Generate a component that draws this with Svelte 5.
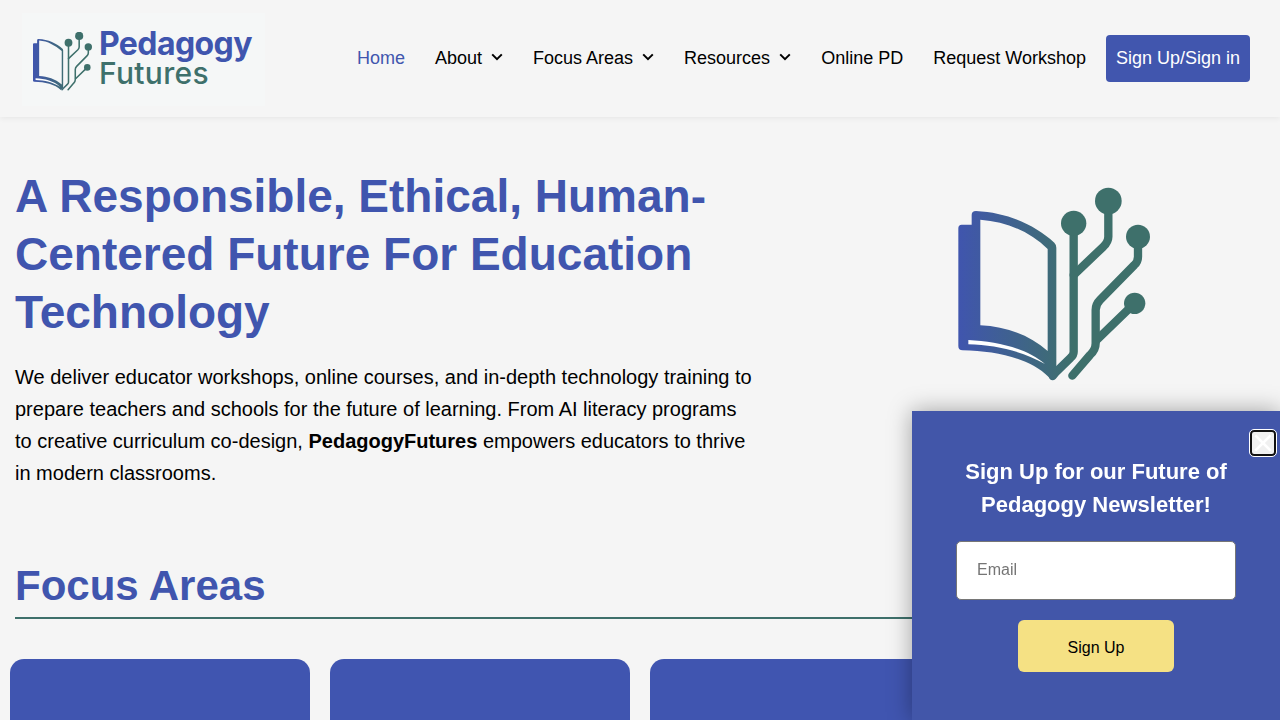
<script>
  const navItems = [
    { label: 'Home', active: true },
    { label: 'About', caret: true },
    { label: 'Focus Areas', caret: true },
    { label: 'Resources', caret: true },
    { label: 'Online PD' },
    { label: 'Request Workshop' },
  ];

  const cards = [1, 2, 3, 4];
</script>

<svelte:head>
  <title>Pedagogy Futures</title>
</svelte:head>

{#snippet bookMark(id, stroke, page, stripe)}
  <defs>
    <linearGradient {id} gradientUnits="userSpaceOnUse" x1="55" y1="0" x2="400" y2="0">
      <stop offset="0" stop-color="#4055ae" />
      <stop offset="1" stop-color="#3e706b" />
    </linearGradient>
  </defs>
  <path
    fill="url(#{id})"
    fill-rule="evenodd"
    d="M65 149H95V120Q95 108 108 108C205 113 285 150 343 203Q349 209 349 218V585L326 606C270 550 170 528 68 526Q55 526 55 513V160Q55 149 65 149Z{page}"
  />
  <path fill="#fff" d={stripe} />
  <g fill="none" stroke="url(#{id})" stroke-width={stroke} stroke-linecap="round" stroke-linejoin="round">
    <path d="M338 603 349 590 392 548Q401 540 401 530V145" />
    <path d="M401 300 490 215Q505 200 505 185V80" />
    <path d="M594 185V245Q594 260 583 270L480 375Q467 388 467 405V505Q467 525 450 540L397 602" />
    <path d="M584 385 470 495" />
  </g>
  <g fill="#3e706b">
    <circle cx="401" cy="145" r="38" />
    <circle cx="505" cy="78" r="40" />
    <circle cx="594" cy="185" r="36" />
    <circle cx="584" cy="385" r="32" />
  </g>
{/snippet}

<div class="page">
  <header class="site-header">
    <a class="logo" href="#home">
      <svg class="logo-mark" viewBox="55 40 575 575" aria-hidden="true">
        {@render bookMark('logo-grad', 15, 'M115 122V470C200 474 270 498 335 552V224C270 170 200 128 115 122Z', 'M80 490V508C170 510 250 530 320 575C260 515 170 495 80 490Z')}
      </svg>
      <span class="logo-text">
        <span class="logo-top">Pedagogy</span>
        <span class="logo-bottom">Futures</span>
      </span>
    </a>

    <nav class="main-nav">
      {#each navItems as item}
        <a href="#home" class="nav-link" class:active={item.active}>
          {item.label}
          {#if item.caret}
            <svg class="caret" viewBox="0 0 12 8" aria-hidden="true">
              <path d="M1.2 1.4 6 6.2l4.8-4.8" />
            </svg>
          {/if}
        </a>
      {/each}
      <a href="#home" class="signin">Sign Up/Sign in</a>
    </nav>
  </header>

  <main>
    <section class="hero">
      <div class="hero-copy">
        <h1>A Responsible, Ethical, Human-Centered Future For Education Technology</h1>
        <p>
          We deliver educator workshops, online courses, and in-depth technology training to
          prepare teachers and schools for the future of learning. From AI literacy programs
          to creative curriculum co-design, <strong>PedagogyFutures</strong> empowers educators to thrive
          in modern classrooms.
        </p>
      </div>
      <div class="hero-art">
        <svg class="hero-mark" viewBox="0 0 690 660" aria-hidden="true">
          {@render bookMark('hero-grad', 25, 'M121 134V451C200 455 270 480 323 528V222C270 170 200 140 121 134Z', 'M85 495V508C170 510 250 530 315 567C260 518 170 500 85 495Z')}
        </svg>
      </div>
    </section>

    <section class="focus">
      <h2>Focus Areas</h2>
      <div class="card-grid">
        {#each cards as card (card)}
          <div class="card"></div>
        {/each}
      </div>
    </section>
  </main>

  <aside class="popup">
    <button class="close" aria-label="Close">
      <svg viewBox="0 0 20 20" aria-hidden="true">
        <path d="M1.5 1.5l17 17M18.5 1.5l-17 17" />
      </svg>
    </button>
    <h3>Sign Up for our Future of Pedagogy Newsletter!</h3>
    <input type="email" placeholder="Email" />
    <button class="submit">Sign Up</button>
  </aside>
</div>

<style>
  :global(body) {
    background: #f5f5f5;
    font-family: "Liberation Sans", Arial, sans-serif;
  }

  .page {
    height: 720px;
    overflow: hidden;
    background: #f5f5f5;
    color: #000;
  }

  a {
    text-decoration: none;
    color: inherit;
  }

  /* header */
  .site-header {
    height: 117px;
    box-sizing: border-box;
    display: flex;
    align-items: center;
    justify-content: space-between;
    padding: 0 30px 0 22px;
    box-shadow: 0 1px 6px rgba(0, 0, 0, 0.07);
  }

  .logo {
    width: 243px;
    height: 93px;
    margin-top: 1px;
    box-sizing: border-box;
    display: flex;
    align-items: center;
    gap: 7px;
    padding-left: 11px;
    background: #f5f7f7;
  }

  .logo-mark {
    width: 59px;
    height: 59px;
    flex: none;
    margin-top: 5px;
  }

  .logo-text {
    display: flex;
    flex-direction: column;
    font-family: Inter, sans-serif;
    line-height: 29px;
    margin-top: -1px;
  }

  .logo-top {
    font-size: 32px;
    font-weight: 700;
    letter-spacing: -0.6px;
    color: #3f55ae;
  }

  .logo-bottom {
    margin-top: 1px;
    font-size: 30px;
    font-weight: 500;
    letter-spacing: 0.3px;
    color: #3e706b;
  }

  .main-nav {
    display: flex;
    align-items: center;
    gap: 30px;
  }

  .nav-link {
    display: flex;
    align-items: center;
    gap: 9px;
    font-size: 18px;
    line-height: 47px;
  }

  .nav-link.active {
    color: #4156ae;
  }

  .caret {
    width: 12px;
    height: 8px;
    margin-bottom: 3px;
  }

  .caret path {
    fill: none;
    stroke: #000;
    stroke-width: 2;
  }

  .signin {
    margin-left: -10px;
    padding: 0 10px;
    font-size: 18px;
    line-height: 47px;
    color: #fff;
    background: #4156ae;
    border-radius: 4px;
  }

  /* hero */
  .hero {
    display: flex;
    padding: 50px 15px 0;
  }

  .hero-copy {
    width: 740px;
    flex: none;
  }

  h1 {
    margin: 0 0 20px;
    font-size: 46px;
    line-height: 58px;
    font-weight: 700;
    color: #4055ae;
  }

  .hero-copy p {
    margin: 0;
    font-size: 20px;
    line-height: 32px;
  }

  .hero-art {
    flex: 1;
    display: flex;
    justify-content: flex-end;
    padding: 8px 80px 0 0;
  }

  .hero-mark {
    width: 230px;
    height: 220px;
    margin-right: 15px;
  }

  /* focus areas */
  .focus {
    margin-top: 68px;
  }

  h2 {
    margin: 0 15px;
    padding-bottom: 2px;
    font-size: 42px;
    line-height: 58px;
    font-weight: 700;
    color: #4055ae;
    border-bottom: 2px solid #3e706b;
  }

  .card-grid {
    display: grid;
    grid-template-columns: repeat(4, 300px);
    gap: 20px;
    margin-top: 40px;
    padding: 0 10px;
  }

  .card {
    height: 320px;
    background: #4055b0;
    border-radius: 14px;
  }

  /* newsletter popup */
  .popup {
    position: fixed;
    right: 0;
    bottom: 0;
    width: 368px;
    height: 309px;
    box-sizing: border-box;
    padding: 44px 44px 0;
    display: flex;
    flex-direction: column;
    align-items: center;
    background: #4256a9;
    box-shadow: 0 0 22px rgba(0, 0, 0, 0.35);
  }

  .popup h3 {
    margin: 0 0 20px;
    font-size: 22px;
    line-height: 33px;
    font-weight: 700;
    text-align: center;
    color: #fff;
  }

  .popup input {
    width: 280px;
    height: 59px;
    flex: none;
    box-sizing: border-box;
    padding: 0 20px 2px;
    font-family: inherit;
    font-size: 16px;
    background: #fff;
    border: 1px solid #767676;
    border-radius: 5px;
  }

  .popup input::placeholder {
    color: #757575;
    opacity: 1;
  }

  .submit {
    width: 156px;
    height: 52px;
    margin-top: 20px;
    padding: 4px 0 0;
    font-family: inherit;
    font-size: 16px;
    color: #000;
    background: #f5e184;
    border: 0;
    border-radius: 6px;
  }

  .close {
    position: absolute;
    top: 19px;
    right: 4px;
    width: 26px;
    height: 26px;
    padding: 2px;
    box-sizing: border-box;
    background: #f0f0f0;
    border: 2px solid #111;
    border-radius: 4px;
    outline: 1px solid #fff;
  }

  .close svg {
    display: block;
    width: 18px;
    height: 18px;
  }

  .close path {
    fill: none;
    stroke: #fff;
    stroke-width: 3;
  }
</style>
